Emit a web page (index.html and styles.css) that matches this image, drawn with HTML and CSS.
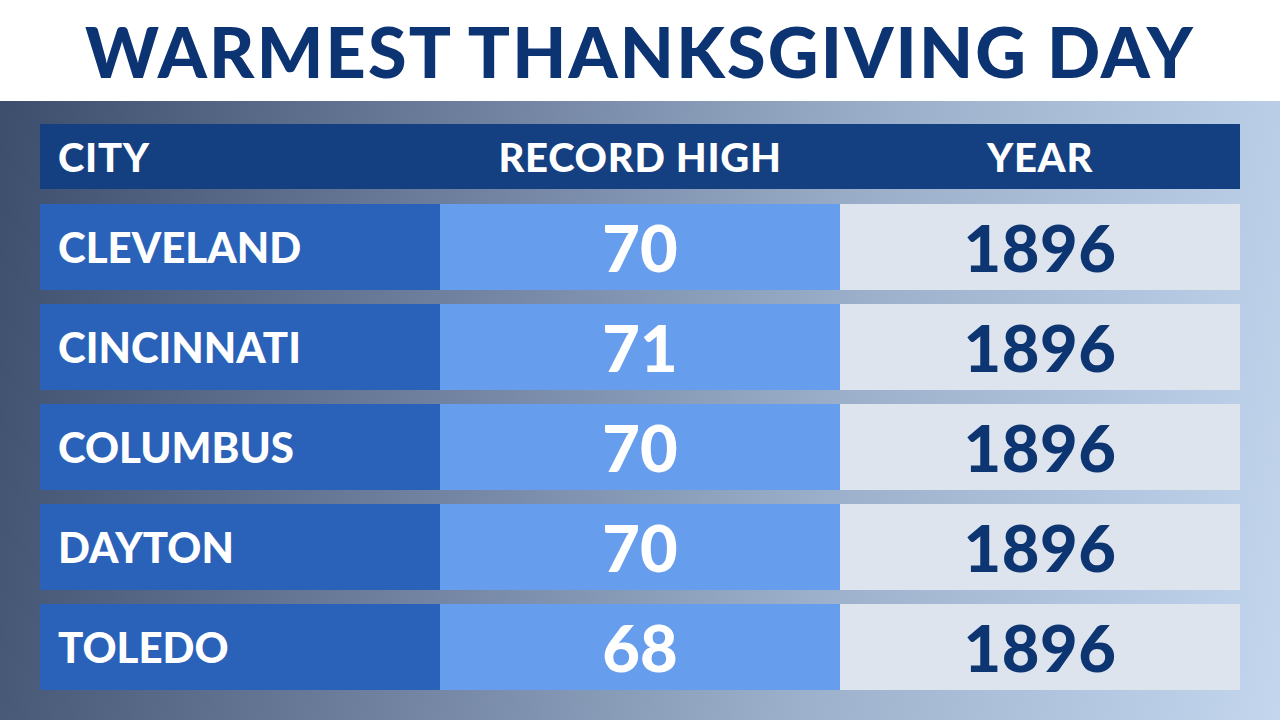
FILE: index.html
```html
<!DOCTYPE html>
<html>
<head>
<meta charset="utf-8">
<link rel="stylesheet" href="styles.css">
</head>
<body>
<div class="page">
  <header class="title-band">
    <h1 class="title">WARMEST THANKSGIVING DAY</h1>
  </header>
  <main class="board">
    <div class="table">
      <div class="head-row">
        <div class="hcell hcell-city">CITY</div>
        <div class="hcell hcell-center">RECORD HIGH</div>
        <div class="hcell hcell-center">YEAR</div>
      </div>
      <div class="row">
        <div class="cell city">CLEVELAND</div>
        <div class="cell temp">70</div>
        <div class="cell year">1896</div>
      </div>
      <div class="row">
        <div class="cell city">CINCINNATI</div>
        <div class="cell temp">71</div>
        <div class="cell year">1896</div>
      </div>
      <div class="row">
        <div class="cell city">COLUMBUS</div>
        <div class="cell temp">70</div>
        <div class="cell year">1896</div>
      </div>
      <div class="row">
        <div class="cell city">DAYTON</div>
        <div class="cell temp">70</div>
        <div class="cell year">1896</div>
      </div>
      <div class="row">
        <div class="cell city">TOLEDO</div>
        <div class="cell temp">68</div>
        <div class="cell year">1896</div>
      </div>
    </div>
  </main>
</div>
</body>
</html>
```
FILE: styles.css
```css
html, body {
  margin: 0;
  padding: 0;
}
body {
  width: 1280px;
  height: 720px;
  overflow: hidden;
  font-family: "Lato", "Liberation Sans", sans-serif;
  font-weight: 900;
}
.page {
  display: flex;
  flex-direction: column;
  width: 1280px;
  height: 720px;
}
.title-band {
  height: 101px;
  background: #ffffff;
  display: flex;
  align-items: center;
  justify-content: center;
}
.title {
  margin: 0;
  font-size: 70px;
  line-height: 1;
  color: #0c3372;
  letter-spacing: 2.2px;
  font-weight: 900;
}
.board {
  flex: 1;
  background: linear-gradient(100deg, #3d4e6c 0%, #6f819f 35%, #9cb0cb 65%, #c3d6ee 100%);
  padding: 23px 40px 0 40px;
}
.table {
  display: flex;
  flex-direction: column;
  gap: 14px;
}
.head-row {
  display: grid;
  grid-template-columns: 400px 400px 400px;
  height: 65px;
  background: #143f80;
  margin-bottom: 1px;
}
.hcell {
  display: flex;
  align-items: center;
  color: #ffffff;
  font-size: 40px;
  letter-spacing: 0.7px;
}
.hcell-city {
  padding-left: 18px;
}
.hcell-center {
  justify-content: center;
}
.row {
  display: grid;
  grid-template-columns: 400px 400px 400px;
  height: 86px;
}
.cell {
  display: flex;
  align-items: center;
}
.city {
  background: #2a62b9;
  color: #ffffff;
  font-size: 42px;
  padding-left: 18px;
}
.temp {
  background: #669ded;
  color: #ffffff;
  font-size: 65px;
  justify-content: center;
}
.year {
  background: #dde4ee;
  color: #0d3571;
  font-size: 65px;
  letter-spacing: 0.5px;
  justify-content: center;
}
```
